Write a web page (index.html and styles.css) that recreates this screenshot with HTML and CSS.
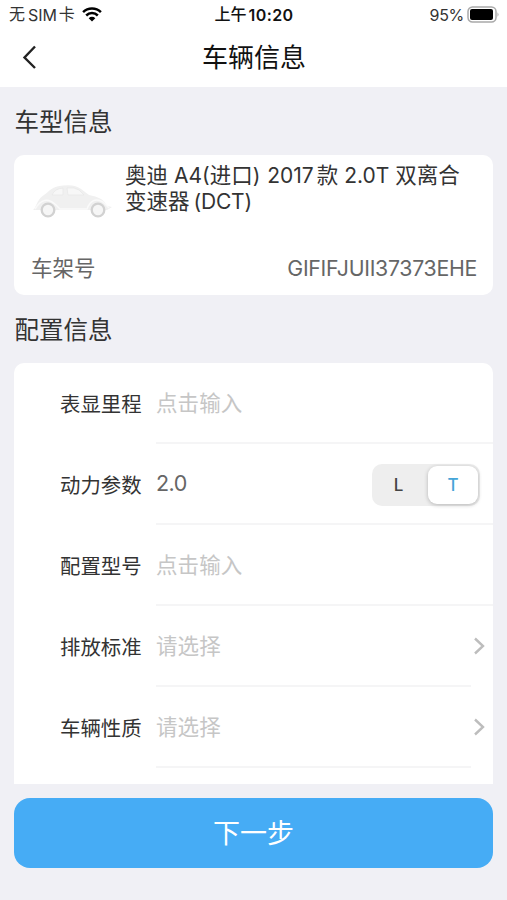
FILE: index.html
```html
<!DOCTYPE html>
<html lang="zh-CN">
<head>
<meta charset="utf-8">
<meta name="viewport" content="width=device-width, initial-scale=1">
<title>车辆信息</title>
<link rel="stylesheet" href="styles.css">
</head>
<body>
<header class="top">
  <div class="status">
    <div class="carrier"><span class="zh">无</span><span class="sim">SIM</span><span class="zh">卡</span>
      <svg class="wifi" width="20" height="15" viewBox="0 0 20 15" fill="none" stroke="#000" stroke-width="2.5"><path d="M1.100 5.200a12.600 12.600 0 0 1 17.800 0M4.200 8.500a8.200 8.200 0 0 1 11.600 0"/><path d="M6.700 11.200a4.700 4.700 0 0 1 6.600 0L10 14.500z" fill="#000" stroke="none"/></svg>
    </div>
    <div class="clock"><span class="zh">上午</span><b>10:20</b></div>
    <div class="power"><span>95%</span>
      <svg width="32" height="17" viewBox="0 0 32 17"><rect x="1" y="1" width="28" height="15" rx="4.500" fill="#fff" stroke="#a9a9a9" stroke-width="1.500"/><rect x="3" y="3" width="23" height="11" rx="2" fill="#000"/><path d="M30.500 6.200q2 2.300 0 4.600z" fill="#a9a9a9"/></svg>
    </div>
  </div>
  <nav class="nav">
    <svg class="back" width="16" height="26" viewBox="0 0 16 26" fill="none" stroke="#222" stroke-width="2.400"><path d="M14 2.500L3.500 13.500l10.500 10.500"/></svg>
    <h1>车辆信息</h1>
  </nav>
</header>
<main class="page">
  <h2>车型信息</h2>
  <section class="card vehicle">
    <div class="model">
      <svg class="car" width="80" height="36" viewBox="0 0 80 36">
        <path d="M0 26C3 24 4 15 11 11C17 7 19 2 30 1.500Q42 0 48 5L56 11Q70 13 74 22L79 23L74 26Z" fill="#f0f0f0"/>
        <path d="M19 11Q22 4.500 30 4V11ZM34 4Q42 3 46 6L51 11H35Z" fill="#f7f7f7" stroke="#e6e6e6" stroke-width=".7"/>
        <path d="M2 25Q11 10 23 21L27 25H54Q59 12 70 18L76 24" fill="none" stroke="#fafafa" stroke-width="1.500"/>
        <g fill="#f6f6f6" stroke="#d2d2d2" stroke-width="2.300"><circle cx="15" cy="26" r="6.300"/><circle cx="65" cy="26" r="6.300"/></g>
      </svg>
      <div class="name">
        <div><span class="zh">奥迪</span> A4(<span class="zh">进口</span>) <span class="year">2017</span><span class="zh kuan">款</span> 2.0T <span class="zh">双离合</span></div>
        <div><span class="zh">变速器</span><span class="dct">(DCT)</span></div>
      </div>
    </div>
    <div class="vin"><span>车架号</span><span class="code">GIFIFJUII37373EHE</span></div>
  </section>
  <h2 class="second">配置信息</h2>
  <section class="card config">
    <div class="row"><label>表显里程</label><div class="field hint">点击输入</div></div>
    <div class="row"><label>动力参数</label><div class="field"><span class="value">2.0</span><div class="switch"><span class="off">L</span><span class="on">T</span></div></div></div>
    <div class="row"><label>配置型号</label><div class="field hint">点击输入</div></div>
    <div class="row pick"><label>排放标准</label><div class="field hint">请选择</div><svg class="arrow" width="12" height="18" viewBox="0 0 12 18"><path d="M2 1.500L10 9L2 16.500"/></svg></div>
    <div class="row pick"><label>车辆性质</label><div class="field hint">请选择</div><svg class="arrow" width="12" height="18" viewBox="0 0 12 18"><path d="M2 1.500L10 9L2 16.500"/></svg></div>
  </section>
  <button class="next" type="button">下一步</button>
</main>
</body>
</html>
```
FILE: styles.css
```css
* { box-sizing: border-box; }
body {
  margin: 0;
  height: 900px;
  overflow: hidden;
  background: #f0f0f5;
  color: #333;
  font-family: Inter, "Noto Sans CJK SC", sans-serif;
}
.top { height: 87px; background: #fff; color: #111; }
.status {
  display: grid;
  grid-template-columns: 1fr auto 1fr;
  align-items: center;
  height: 29px;
  padding: 0 8px 0 9px;
  font-size: 16px;
  line-height: 28px;
  white-space: nowrap;
}
.status .zh { line-height: 27px; height: 28px; }
.carrier { display: flex; align-items: center; color: #333; }
.sim { margin: 0 2px 0 3px; letter-spacing: -.1px; }
.wifi { margin: 0 0 1px 7px; }
.clock { display: flex; font-weight: 500; }
.clock b { margin-left: 2px; font-weight: 600; letter-spacing: .4px; }
.power { display: flex; align-items: center; justify-content: flex-end; gap: 3px; color: #333; }
.power span { letter-spacing: -.3px; }
.power svg { margin-bottom: 1px; }
.nav {
  display: grid;
  grid-template-columns: 1fr auto 1fr;
  align-items: center;
  height: 56px;
}
.back { margin-left: 21px; }
h1 { grid-column: 2; margin: 2px 0 0 1px; font-size: 26px; line-height: 40px; font-weight: 400; }
.page { padding: 0 14px; }
h2 {
  margin: 0;
  height: 68px;
  padding-left: .5px;
  line-height: 70px;
  font-size: 24.500px;
  font-weight: 400;
}
.card { background: #fff; border-radius: 10px; }
.vehicle { height: 140px; padding: 7px 16px 0 19px; }
.model { display: flex; height: 86px; }
.car { margin: 22px 12px 0 0; }
.name { padding-top: 1px; font-size: 21px; line-height: 26px; white-space: nowrap; }
.name > div { height: 26px; }
.name .zh { font-size: 21.500px; line-height: 20px; }
.vin {
  display: flex;
  justify-content: space-between;
  margin-left: -2px;
  font-size: 21.500px;
  line-height: 41px;
  color: #666;
}
.code { font-size: 21.300px; letter-spacing: -.3px; }
.year { margin-left: 1px; }
.dct { margin-left: 4px; letter-spacing: -.2px; }
.kuan { margin-left: 3px; }
.config { height: 421px; overflow: hidden; border-radius: 10px 10px 0 0; }
.row { display: flex; height: 81px; padding-left: 46px; }
.row label { width: 96px; font-size: 20.400px; line-height: 83px; }
.field {
  display: flex;
  flex: 1;
  align-items: center;
  justify-content: space-between;
  height: 81px;
  border-bottom: 2px solid #f5f5f6;
  font-size: 21.500px;
  line-height: 79px;
  color: #666;
}
.field.hint { padding-top: 1px; letter-spacing: .1px; color: #c6c6c6; }
.pick { padding-right: 8px; align-items: center; }
.pick label { padding-top: 1px; }
.value { letter-spacing: -.5px; }
.arrow { margin: 0 0 1px 2px; fill: none; stroke: #bdbdbd; stroke-width: 2.400px; }
.switch {
  display: flex;
  width: 108px;
  height: 42px;
  margin: 2px 13px 0 0;
  padding: 2px;
  border-radius: 10px;
  background: #eee;
  font-size: 17px;
  font-weight: 500;
  line-height: 38px;
  text-align: center;
  color: #444;
}
.switch .off { width: 54px; padding-right: 5px; }
.switch .on { width: 50px; border-radius: 9px; background: #fff; color: #45a5d8; box-shadow: 0 1px 4px rgba(0, 0, 0, .24); }
.next {
  display: block;
  width: 100%;
  height: 70px;
  margin-top: 14px;
  padding: 0 0 2px;
  border: 0;
  border-radius: 16px;
  background: #46acf5;
  color: #fff;
  font: 400 27px/68px "Noto Sans CJK SC", sans-serif;
}
```
